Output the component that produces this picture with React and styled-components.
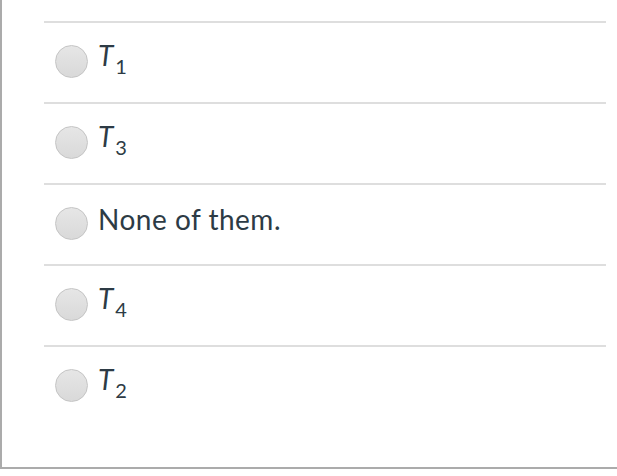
import React from "react";
import styled, { createGlobalStyle } from "styled-components";

const GlobalStyle = createGlobalStyle`
  html, body {
    margin: 0;
    padding: 0;
    background: #ffffff;
  }
  body {
    font-family: Lato, "Open Sans", sans-serif;
    color: #2d3b45;
  }
`;

const Frame = styled.div`
  box-sizing: border-box;
  width: 640px;
  height: 469px;
  border-left: 2px solid #ababab;
  border-bottom: 2px solid #ababab;
  padding: 21px 0 0 42px;
`;

const AnswerList = styled.div`
  display: flex;
  flex-direction: column;
  width: 562px;
`;

const Answer = styled.label`
  box-sizing: border-box;
  display: flex;
  align-items: center;
  gap: 10px;
  height: 81px;
  padding: 0 0 3px 11px;
  border-top: 2px solid #dedede;
`;

const Radio = styled.span`
  box-sizing: border-box;
  flex: none;
  width: 33px;
  height: 33px;
  border-radius: 50%;
  border: 1px solid #c4c4c4;
  background: linear-gradient(#e6e6e6, #d9d9d9);
`;

const Text = styled.span`
  font-size: 28px;
  line-height: 1;
  letter-spacing: ${({ $math }) => ($math ? "0" : "0.5px")};
  margin-bottom: ${({ $math }) => ($math ? "13px" : "9px")};
`;

const Var = styled.span`
  font-style: italic;
`;

const Sub = styled.sub`
  font-size: 20px;
  line-height: 0;
  vertical-align: -8px;
  margin-left: 2px;
`;

const answers = [
  { t: "1" },
  { t: "3" },
  { text: "None of them." },
  { t: "4" },
  { t: "2" },
];

export default function App() {
  return (
    <>
      <GlobalStyle />
      <Frame>
        <AnswerList>
          {answers.map((a, i) => (
            <Answer key={i}>
              <Radio />
              <Text $math={!a.text}>
                {a.text ? (
                  a.text
                ) : (
                  <>
                    <Var>T</Var>
                    <Sub>{a.t}</Sub>
                  </>
                )}
              </Text>
            </Answer>
          ))}
        </AnswerList>
      </Frame>
    </>
  );
}
